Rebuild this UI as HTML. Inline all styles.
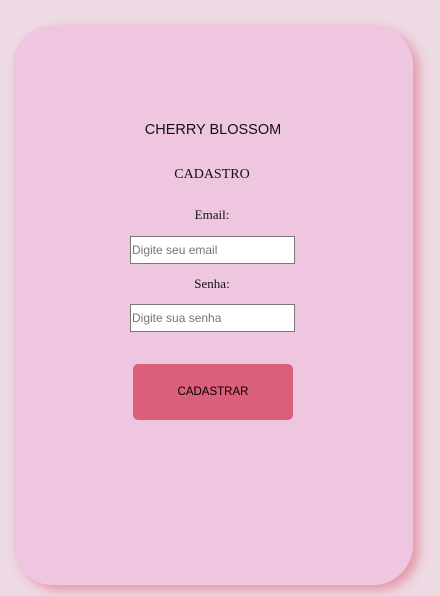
<!DOCTYPE html>
<html><head><style>
body{margin:0;width:440px;height:596px;background:#eddae4;position:relative;overflow:hidden;font-family:"Liberation Serif",serif;}
.card{position:absolute;left:13px;top:25px;width:400px;height:560px;border-radius:40px;background:#eec6e0;box-shadow:6px 5px 10px rgba(225,125,145,0.7);}
.t{position:absolute;left:0;width:440px;text-align:center;color:#111;}
.in{position:absolute;left:130px;width:162px;height:26px;border:1px solid #777;background:#fff;font-family:"Liberation Sans",sans-serif;font-size:12px;color:#757575;line-height:26px;padding-left:1px;}
.btn{position:absolute;left:133px;top:364px;width:160px;height:56px;border-radius:5px;background:#db5f7a;font-family:"Liberation Sans",sans-serif;font-size:11.5px;color:#000;text-align:center;line-height:56px;}
</style></head><body>
<div class="card"></div>
<div class="t" style="top:122px;font-family:'Liberation Sans',sans-serif;font-size:14.5px;left:-7px;">CHERRY BLOSSOM</div>
<div class="t" style="top:167px;font-size:14px;left:-8px;">CADASTRO</div>
<div class="t" style="top:207px;font-size:13px;left:-8px;">Email:</div>
<div class="in" style="top:236px;">Digite seu email</div>
<div class="t" style="top:276px;font-size:13px;left:-8px;">Senha:</div>
<div class="in" style="top:304px;">Digite sua senha</div>
<div class="btn">CADASTRAR</div>
</body></html>
